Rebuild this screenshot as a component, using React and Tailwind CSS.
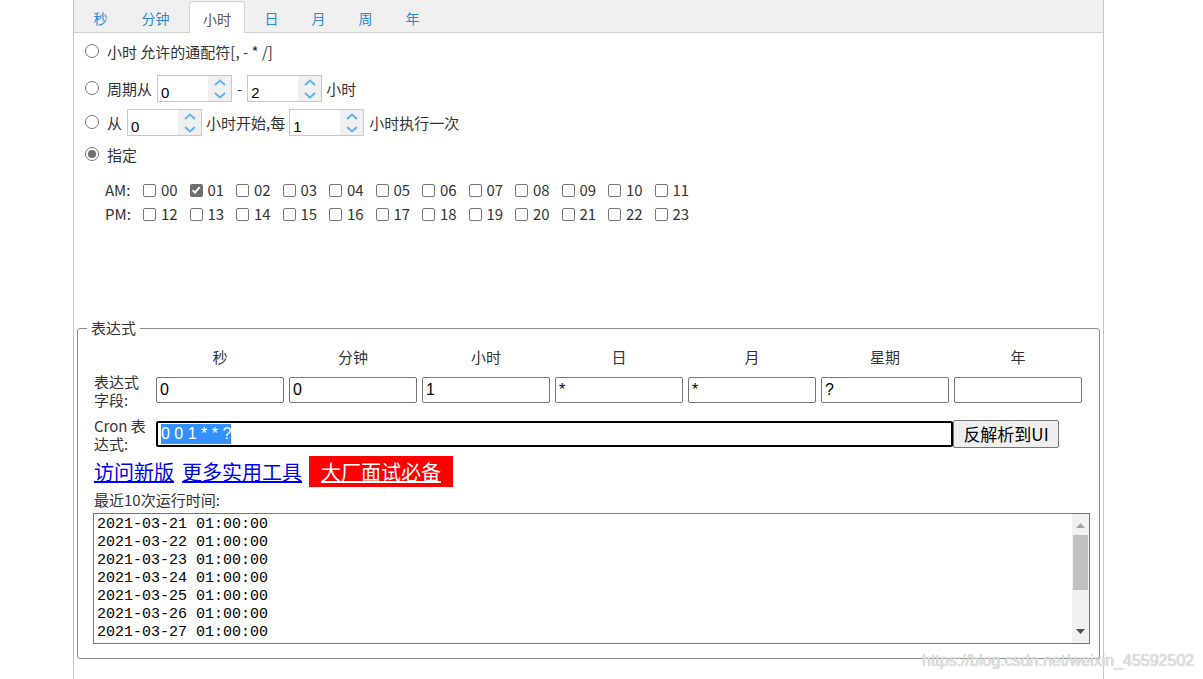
import React from 'react'

const tabs = [
  { label: '秒', cls: 'ml-[3px] w-[47px]' },
  { label: '分钟', cls: 'w-[63px]' },
  { label: '小时', cls: 'ml-[2px] w-[56px]', active: true },
  { label: '日', cls: 'ml-[3px] w-[47px]' },
  { label: '月', cls: 'w-[47px]' },
  { label: '周', cls: 'w-[47px]' },
  { label: '年', cls: 'w-[47px]' },
]

const fields = [
  { head: '秒', value: '0' },
  { head: '分钟', value: '0' },
  { head: '小时', value: '1' },
  { head: '日', value: '*' },
  { head: '月', value: '*' },
  { head: '星期', value: '?' },
  { head: '年', value: '' },
]

const am = ['00', '01', '02', '03', '04', '05', '06', '07', '08', '09', '10', '11']
const pm = ['12', '13', '14', '15', '16', '17', '18', '19', '20', '21', '22', '23']

// textarea shows 7 of the 10 runs
const runs = [21, 22, 23, 24, 25, 26, 27].map(d => `2021-03-${d} 01:00:00`)

const Radio = ({ checked }) => (
  <span className="mb-[2px] ml-[11px] mr-[8px] flex h-[14px] w-[14px] shrink-0 items-center justify-center rounded-full border border-[#767676] bg-white">
    {checked && <span className="h-[8px] w-[8px] rounded-full bg-[#6f6f6f]" />}
  </span>
)

const Checkbox = ({ checked }) => (
  checked ? (
    <span className="flex h-[13px] w-[13px] shrink-0 items-center justify-center rounded-[2px] bg-[#6f6f6f]">
      <svg width="10" height="10" viewBox="0 0 10 10">
        <path d="M1.5 5.2 L4 7.6 L8.6 2.2" stroke="#fff" strokeWidth="1.8" fill="none" />
      </svg>
    </span>
  ) : (
    <span className="h-[13px] w-[13px] shrink-0 rounded-[2px] border border-[#767676] bg-white" />
  )
)

const Spinner = ({ value }) => (
  <div className="flex h-[27px] w-[75px] shrink-0 border border-[#c8c8c8] bg-white">
    <div className="flex-1 pl-[3px] pt-[8px] font-['Liberation_Sans',sans-serif] text-[15px] leading-[17px] text-black">
      {value}
    </div>
    <div className="flex w-[23px] flex-col items-center justify-center gap-[6px] bg-[#f0f0f0]">
      <svg width="12" height="7" viewBox="0 0 12 7">
        <path d="M1 6 L6 1.5 L11 6" stroke="#62b2ec" strokeWidth="2" fill="none" />
      </svg>
      <svg width="12" height="7" viewBox="0 0 12 7">
        <path d="M1 1 L6 5.5 L11 1" stroke="#62b2ec" strokeWidth="2" fill="none" />
      </svg>
    </div>
  </div>
)

const HourRow = ({ label, hours, checked }) => (
  <div className="flex h-[24px] items-center">
    <span className="ml-[31px] w-[38px]">{label}</span>
    {hours.map(h => (
      <span key={h} className="flex w-[46.5px] items-center">
        <Checkbox checked={checked === h} />
        <span className="ml-[5px]">{h}</span>
      </span>
    ))}
  </div>
)

export default function App() {
  return (
    <div className="relative min-h-screen bg-white font-['Noto_Sans_CJK_SC',sans-serif] text-[15px] text-[#333]">
      <div className="ml-[73px] min-h-screen w-[1031px] border-x border-[#c8c8c8]">
        {/* tabs */}
        <div className="flex h-[33px] items-end border-b border-[#d3d3d3] bg-[#f0f0f0] text-[14px]">
          {tabs.map(t => (
            <div
              key={t.label}
              className={`${t.cls} flex items-center justify-center pt-[3px] leading-[18px] ${
                t.active
                  ? '-mb-px h-[32px] rounded-t-[4px] border border-b-0 border-[#d3d3d3] bg-white text-[#555]'
                  : 'h-[32px] text-[#2b8ad3]'
              }`}
            >
              {t.label}
            </div>
          ))}
        </div>

        {/* options */}
        <div className="mt-[6px] flex h-[26px] items-center leading-[20px]">
          <Radio />
          <span>小时 允许的通配符[, - * /]</span>
        </div>

        <div className="mt-[10px] flex h-[27px] items-center leading-[20px]">
          <Radio />
          <span className="mr-[5px]">周期从</span>
          <Spinner value="0" />
          <span className="mx-[5px]">-</span>
          <Spinner value="2" />
          <span className="ml-[4px]">小时</span>
        </div>

        <div className="mt-[7px] flex h-[27px] items-center leading-[20px]">
          <Radio />
          <span className="mr-[5px]">从</span>
          <Spinner value="0" />
          <span className="mx-[4px]">小时开始,每</span>
          <Spinner value="1" />
          <span className="ml-[5px]">小时执行一次</span>
        </div>

        <div className="mt-[6px] flex h-[26px] items-center leading-[20px]">
          <Radio checked />
          <span>指定</span>
        </div>

        <div className="mt-[10px] leading-[18px]">
          <HourRow label="AM:" hours={am} checked="01" />
          <HourRow label="PM:" hours={pm} />
        </div>

        {/* expression */}
        <fieldset className="ml-[3px] mr-[4px] mt-[93px] rounded-[3px] border border-[#8c8c8c] px-[9px] pb-[14px] pt-[10px]">
          <legend className="px-[4px] text-[15px] leading-[18px]">表达式</legend>
          <div className="pl-[7px]">
            <div className="flex h-[20px] items-center leading-[20px]">
              <span className="w-[62px]" />
              <div className="flex gap-[5px]">
                {fields.map(f => (
                  <span key={f.head} className="w-[128px] text-center">{f.head}</span>
                ))}
              </div>
            </div>

            <div className="mt-[6px] flex">
              <span className="w-[62px] leading-[18px]">表达式<br />字段:</span>
              <div className="mt-[4px] flex gap-[5px]">
                {fields.map(f => (
                  <div
                    key={f.head}
                    className="flex h-[26px] w-[128px] items-center rounded-[2px] border border-[#767676] pl-[3px] font-['Liberation_Sans',sans-serif] text-[16px] text-black"
                  >
                    {f.value}
                  </div>
                ))}
              </div>
            </div>

            <div className="mt-[8px] flex">
              <span className="w-[62px] leading-[18px]">Cron 表<br />达式:</span>
              <div className="mt-[4px] flex h-[26px] w-[797px] items-center rounded-[2px] border-2 border-black pl-[3px] font-['Liberation_Sans',sans-serif] text-[16px]">
                <span className="bg-[#3390ff] leading-[20px] text-white">0 0 1 * * ?</span>
              </div>
              <button className="mt-[3px] h-[28px] w-[106px] rounded-[2px] border border-[#767676] bg-[#efefef] text-[17px] leading-[20px] text-black">
                反解析到UI
              </button>
            </div>

            <div className="mt-[3px] flex h-[31px] items-center text-[20px] leading-[24px]">
              <a href="#" className="text-[#0000ee] underline">访问新版</a>
              <a href="#" className="ml-[8px] text-[#0000ee] underline">更多实用工具</a>
              <span className="ml-[7px] flex h-[31px] items-center bg-[#ff0000] px-[12px] text-white underline">
                大厂面试必备
              </span>
            </div>

            <div className="mt-[4px] leading-[18px]">最近10次运行时间:</div>

            <div className="-ml-[1px] mt-[4px] flex h-[131px] w-[997px] border border-[#767676]">
              <div className="flex-1 overflow-hidden pl-[3px] pt-[2px] font-['Liberation_Mono',monospace] text-[15px] leading-[18px] text-black">
                {runs.map(r => (
                  <div key={r}>{r}</div>
                ))}
              </div>
              <div className="flex w-[17px] flex-col bg-[#f1f1f1]">
                <div className="flex h-[20px] items-center justify-center pt-[2px]">
                  <svg width="9" height="5" viewBox="0 0 9 5"><path d="M4.5 0 L9 5 L0 5 Z" fill="#a3a3a3" /></svg>
                </div>
                <div className="flex-1">
                  <div className="mx-[1px] mt-[1px] h-[55px] bg-[#c1c1c1]" />
                </div>
                <div className="flex h-[20px] items-center justify-center pb-[4px]">
                  <svg width="9" height="5" viewBox="0 0 9 5"><path d="M0 0 L9 0 L4.5 5 Z" fill="#505050" /></svg>
                </div>
              </div>
            </div>
          </div>
        </fieldset>
      </div>

      <div className="absolute left-[922px] top-[652px] font-['Liberation_Sans',sans-serif] text-[16px] leading-[18px] text-[#e2e2e2] [text-shadow:0_0_1px_#a8a8a8]">
        https://blog.csdn.net/weixin_45592502
      </div>
    </div>
  )
}
